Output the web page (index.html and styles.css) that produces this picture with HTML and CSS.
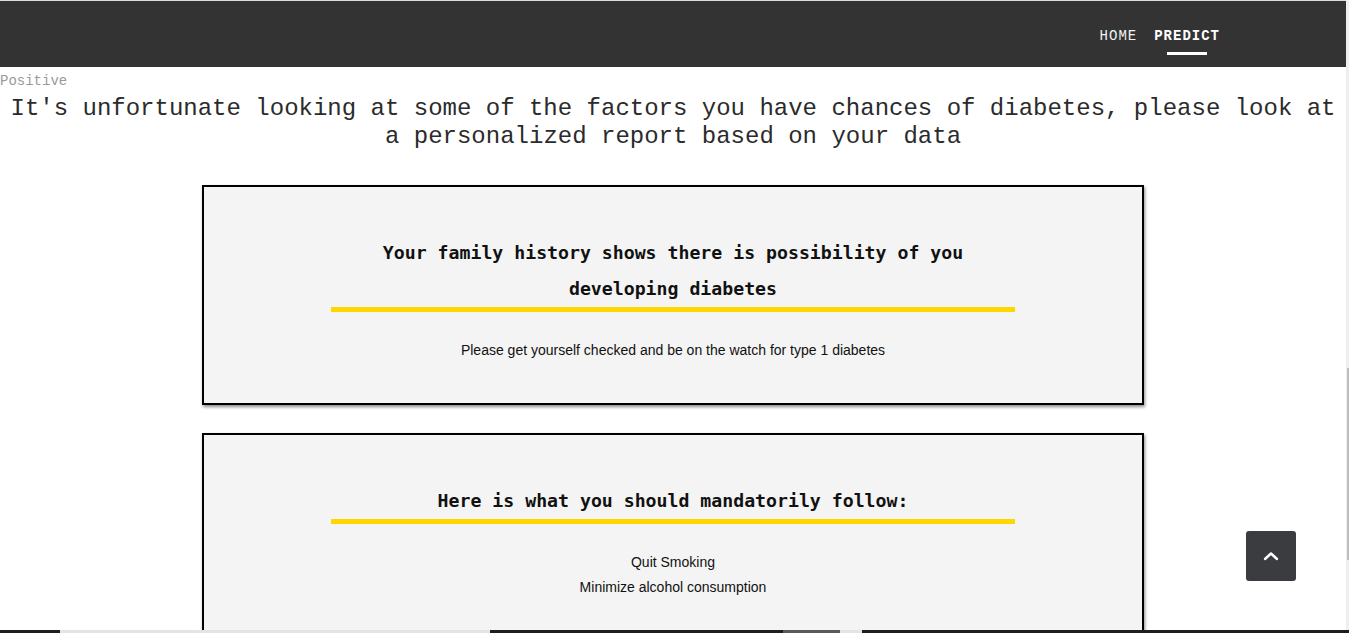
FILE: index.html
```html
<!DOCTYPE html>
<html lang="en">
<head>
<meta charset="utf-8">
<title>Predict</title>
<link rel="stylesheet" href="styles.css">
</head>
<body>
<header class="topbar">
  <nav class="nav">
    <a class="nav-link" href="#">HOME</a>
    <a class="nav-link active" href="#">PREDICT</a>
  </nav>
</header>
<main class="content">
  <p class="result">Positive</p>
  <h1 class="headline">It's unfortunate looking at some of the factors you have chances of diabetes, please look at a personalized report based on your data</h1>

  <section class="card">
    <h2 class="card-title">Your family history shows there is possibility of you developing diabetes</h2>
    <ul class="card-list">
      <li>Please get yourself checked and be on the watch for type 1 diabetes</li>
    </ul>
  </section>

  <section class="card">
    <h2 class="card-title">Here is what you should mandatorily follow:</h2>
    <ul class="card-list">
      <li>Quit Smoking</li>
      <li>Minimize alcohol consumption</li>
    </ul>
  </section>
</main>

<a class="to-top" href="#">
  <svg width="18" height="12" viewBox="0 0 18 12"><path d="M3 9 L9 3.5 L15 9" fill="none" stroke="#fff" stroke-width="2.4" stroke-linecap="round" stroke-linejoin="round"/></svg>
</a>

<div class="scroll-rail"><div class="scroll-thumb"></div></div>
<div class="bottom-strip">
  <span class="seg dark s1"></span>
  <span class="seg light s2"></span>
  <span class="seg dark s3"></span>
  <span class="seg mid s4"></span>
  <span class="seg light s5"></span>
  <span class="seg dark s6"></span>
</div>
</body>
</html>
```

FILE: styles.css
```css
html, body {
  margin: 0;
  padding: 0;
  background: #ffffff;
}

body {
  padding-right: 3px;
  font-family: "Liberation Mono", "DejaVu Sans Mono", monospace;
  color: #222;
}

.topbar {
  height: 66px;
  background: #333333;
  border-top: 1px solid #dcdcdc;
  display: flex;
  justify-content: flex-end;
  align-items: flex-start;
  padding-right: 126px;
}

.nav {
  display: flex;
  gap: 17px;
  padding-top: 27px;
}

.nav-link {
  position: relative;
  color: #f2f2f2;
  text-decoration: none;
  font-family: "Liberation Mono", monospace;
  font-size: 14px;
  line-height: 17px;
  letter-spacing: 1px;
}

.nav-link.active {
  font-weight: bold;
  color: #ffffff;
}

.nav-link.active::after {
  content: "";
  position: absolute;
  left: 50%;
  margin-left: -20px;
  top: 24px;
  width: 40px;
  height: 3px;
  background: #ffffff;
}

.content {
  padding-bottom: 40px;
}

.result {
  margin: 4px 0 0;
  font-size: 14px;
  line-height: 20px;
  color: #9a9a9a;
}

.headline {
  margin: 4px 0 34px;
  font-weight: normal;
  font-size: 24px;
  line-height: 28px;
  text-align: center;
  color: #2b2b2b;
}

.card {
  width: 70%;
  margin: 0 auto 28px;
  background: #f4f4f4;
  border: 2px solid #000;
  box-shadow: 1px 2px 3px rgba(0, 0, 0, 0.45);
  padding: 48px 0 40px;
  box-sizing: border-box;
}

.card-title {
  width: 73%;
  margin: 0 auto;
  font-family: "DejaVu Sans Mono", monospace;
  font-weight: bold;
  font-size: 18.2px;
  line-height: 36px;
  text-align: center;
  color: #111;
  border-bottom: 5px solid #ffd700;
}

.card-list {
  list-style: none;
  margin: 26px 0 0;
  padding: 0;
  text-align: center;
  font-family: "Liberation Sans", Arial, sans-serif;
  font-size: 14px;
  line-height: 25px;
  color: #111;
}

.to-top {
  position: fixed;
  left: 1246px;
  top: 531px;
  width: 50px;
  height: 50px;
  border-radius: 3px;
  background: #3b3c40;
  display: flex;
  align-items: center;
  justify-content: center;
}

.scroll-rail {
  position: fixed;
  top: 0;
  right: 0;
  width: 3px;
  height: 100%;
  background: #efefef;
}

.scroll-thumb {
  position: absolute;
  top: 368px;
  left: 1px;
  width: 2px;
  height: 192px;
  background: #bdbdbd;
}

.bottom-strip {
  position: fixed;
  left: 0;
  bottom: 0;
  width: 100%;
  height: 3px;
  display: flex;
}

.seg { display: block; height: 3px; }
.seg.dark { background: #1e1e1e; }
.seg.light { background: #e4e4e4; }
.seg.mid { background: #5a5a5a; }
.s1 { width: 60px; }
.s2 { width: 430px; }
.s3 { width: 293px; }
.s4 { width: 57px; }
.s5 { width: 22px; }
.s6 { flex: 1; }
```
